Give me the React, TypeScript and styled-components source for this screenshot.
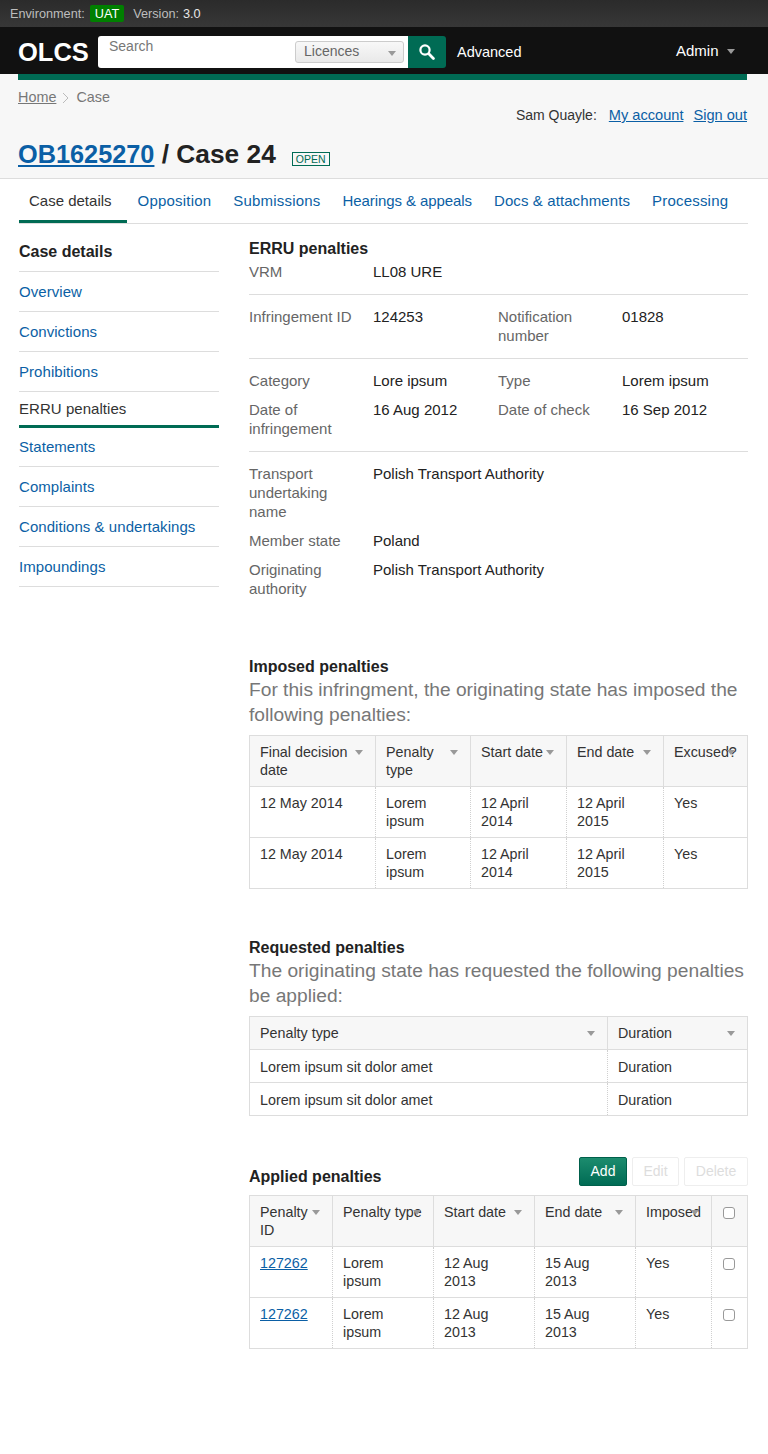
import React from "react";
import styled, { createGlobalStyle } from "styled-components";

const Global = createGlobalStyle`
  html, body { margin: 0; padding: 0; background: #fff; }
  body { font-family: "Liberation Sans", Arial, sans-serif; font-size: 15px; line-height: 19px; color: #222; }
  * { box-sizing: border-box; }
`;

const Page = styled.div`width: 768px; min-height: 1454px; background: #fff;`;

const EnvBar = styled.div`
  height: 27px; padding: 5px 10px 0; display: flex; align-items: flex-start;
  background: linear-gradient(#2b2b2b, #373737); color: #bdbdbd; font-size: 12.7px; line-height: 18px;
`;
const EnvBadge = styled.span`
  height: 17px; margin: 0 9px 0 5px; padding: 0 5px; background: #007f00; color: #fff; border-radius: 2px;
`;
const EnvValue = styled.span`color: #e8e8e8; margin-left: 4px;`;

const Header = styled.header`
  height: 47px; background: #111; display: flex; align-items: flex-start; padding: 9px 33px 0 18px; color: #fff;
`;
const Logo = styled.div`font-size: 25.5px; font-weight: 700; line-height: 32px; width: 80px;`;
const SearchBox = styled.div`
  width: 310px; height: 32px; background: #fff; border-radius: 3px 0 0 3px; padding: 0 4px 0 11px;
  display: flex; justify-content: space-between; align-items: flex-start;
`;
const Placeholder = styled.span`color: #777; font-size: 14px; line-height: 20px;`;
const FakeSelect = styled.div`
  width: 109px; height: 22px; margin-top: 5px; padding-left: 8px; border: 1px solid #ccc; border-radius: 3px;
  background: linear-gradient(#f8f8f8, #e9e9e9); color: #666; font-size: 14px; line-height: 18px; position: relative;
`;
const Caret = styled.span`
  position: absolute; width: 0; height: 0; border-left: 4px solid transparent; border-right: 4px solid transparent;
  border-top: 5px solid #999;
`;
const SelectCaret = styled(Caret)`right: 7px; top: 9px;`;
const SearchButton = styled.div`
  width: 38px; height: 32px; background: #006b54; border-radius: 0 3px 3px 0;
  display: flex; align-items: center; justify-content: center;
`;
const Advanced = styled.span`margin-left: 11px; font-size: 14.5px; line-height: 32px;`;
const Admin = styled.div`
  margin-left: auto; font-size: 15px; line-height: 30px; position: relative; padding-right: 16px; width: 59px; white-space: nowrap;
`;
const AdminCaret = styled(Caret)`right: 0; top: 13px;`;
const GreenRule = styled.div`height: 6px; background: #006b54; margin: 0 21px 0 18px;`;
const GreenWrap = styled.div`background-color: #f7f7f7;`;

const PageHead = styled.div`
  background: #f7f7f7; height: 99px; padding: 8px 21px 0 18px; border-bottom: 1px solid #ddd;
`;
const Breadcrumb = styled.div`display: flex; align-items: center; color: #777; font-size: 14.4px; line-height: 19px;`;
const CrumbLink = styled.a`color: #777; text-decoration: underline;`;
const CrumbSep = styled.svg`width: 8px; height: 12px; margin: 1px 6px 0 6px;`;
const UserRow = styled.div`display: flex; justify-content: flex-end; font-size: 14.6px; line-height: 18px; margin-top: -1px;`;
const UserName = styled.span`margin-right: 12px; color: #333; font-size: 14px;`;
const UserLink = styled.a`color: #0b5fa5; text-decoration: underline; margin-left: ${p => p.$gap || 0}px;`;
const TitleRow = styled.div`display: flex; align-items: center; margin-top: 14px;`;
const Title = styled.h1`margin: 0; font-size: 26.3px; line-height: 32px; font-weight: 700; color: #222;`;
const TitleLink = styled.a`color: #0b5fa5; text-decoration: underline; font-size: 25.3px;`;
const Status = styled.span`
  margin: 9px 0 0 16px; padding: 0 3px; height: 14px; border: 1px solid #006b54; color: #006b54; font-size: 10.5px; line-height: 13px;
`;

const Tabs = styled.nav`
  margin: 0 20px 0 19px; height: 45px; display: flex; border-bottom: 1px solid #ddd; padding-top: 13px;
`;
const Tab = styled.a`
  height: 31px; padding: ${p => p.$active ? "0 15px 0 10px" : "0 11px"}; font-size: 15px; line-height: 18px; white-space: nowrap;
  letter-spacing: ${p => p.$track ?? .25}px;
  color: ${p => p.$active ? "#333" : "#0b5fa5"};
  border-bottom: ${p => p.$active ? "3px solid #006b54" : "0"};
`;

const Body = styled.div`display: flex; padding: 0 20px 0 19px;`;
const Side = styled.aside`width: 200px; margin-right: 30px; flex: none; padding-top: 18px;`;
const SideTitle = styled.div`
  font-size: 16px; font-weight: 700; line-height: 20px; height: 30px; border-bottom: 1px solid #ddd; color: #222;
`;
const SideItem = styled.a`
  display: block; height: ${p => p.$active ? 36 : 40}px; padding-top: ${p => p.$active ? 7 : 10}px; font-size: 15px; line-height: 19px;
  letter-spacing: .05px;
  margin-bottom: ${p => p.$active ? -1 : 0}px;
  color: ${p => p.$active ? "#333" : "#0b5fa5"};
  border-bottom: ${p => p.$active ? "3px solid #006b54" : "1px solid #ddd"};
`;
const Main = styled.main`flex: 1; width: 499px; padding-top: 15px;`;
const Heading = styled.h2`margin: 0; font-size: 16px; line-height: 20px; font-weight: 700; color: #222;`;
const Sub = styled.p`margin: 0 0 8px; font-size: 19.2px; line-height: 25px; color: #777;`;

const Fields = styled.dl`
  margin: 0; display: grid; grid-template-columns: 124px 125px 124px 1fr; row-gap: 10px; padding: ${p => p.$top ?? 12}px 0 ${p => p.$bottom ?? 12}px;
  border-bottom: ${p => p.$last ? "0" : "1px solid #ddd"}; font-size: 15px; line-height: 19px;
`;
const Label = styled.dt`color: #666; padding-right: 8px;`;
const Value = styled.dd`margin: 0; color: #222; grid-column: ${p => p.$wide ? "span 3" : "auto"};`;

const Section = styled.section`margin-top: ${p => p.$top}px;`;
const Table = styled.table`
  width: 498px; table-layout: fixed; border-collapse: collapse; font-size: 14.3px; line-height: 18px;
`;
const Th = styled.th`
  position: relative; text-align: left; font-weight: 400; vertical-align: top; padding: 7px 8px 5px 10px; background: #f7f7f7;
  border: 1px solid #ddd; color: #333; height: ${p => p.$h || 51}px;
`;
const SortCaret = styled(Caret)`right: 12px; top: 14px;`;
const Td = styled.td`
  vertical-align: top; padding: ${p => p.$h ? 8 : 7}px 12px ${p => p.$h ? 5 : 6}px 10px; color: #333; height: ${p => p.$h || 51}px;
  border-top: 1px solid #ddd; border-bottom: 1px solid #ddd; border-left: 1px dotted #d0d0d0; border-right: 1px dotted #d0d0d0;
  &:first-child { border-left: 1px solid #ddd; }
  &:last-child { border-right: 1px solid #ddd; }
`;
const CellLink = styled.a`color: #0b5fa5; text-decoration: underline;`;
const Check = styled.input.attrs({ type: "checkbox" })`
  appearance: none; display: block; width: 12px; height: 12px; margin: 4px 0 0 1px; background: #fff;
  border: 1px solid #999; border-radius: 3px;
`;
const ActionRow = styled.div`display: flex; justify-content: space-between; align-items: flex-start; height: 38px;`;
const AppliedHeading = styled(Heading)`margin-top: 10px;`;
const Actions = styled.div`display: flex; gap: 5px;`;
const Button = styled.button`
  height: 29px; padding: 0 0 2px; width: ${p => p.$w}px; font: 14px "Liberation Sans", Arial, sans-serif; border-radius: 2px;
  border: 1px solid ${p => p.$primary ? "#00604b" : "#eee"};
  background: ${p => p.$primary ? "linear-gradient(#1c8c6e, #006b54)" : "#fff"};
  color: ${p => p.$primary ? "#fff" : "#ddd"};
`;

const Cols = ({ w }: { w: number[] }) => <colgroup>{w.map((x, i) => <col key={i} width={x} />)}</colgroup>;
const H = ({ children, h }: { children?: React.ReactNode; h?: number }) => <Th $h={h}>{children}<SortCaret /></Th>;

export default function App() {
  return (
    <Page>
      <Global />
      <EnvBar>Environment:<EnvBadge>UAT</EnvBadge>Version:<EnvValue>3.0</EnvValue></EnvBar>
      <Header>
        <Logo>OLCS</Logo>
        <SearchBox>
          <Placeholder>Search</Placeholder>
          <FakeSelect>Licences<SelectCaret /></FakeSelect>
        </SearchBox>
        <SearchButton>
          <svg width="16" height="16" viewBox="0 0 16 16" fill="none" stroke="#fff">
            <circle cx="6" cy="6" r="4.6" strokeWidth="2.2" />
            <path d="M9.8 9.8l4.6 4.6" strokeWidth="2.8" strokeLinecap="round" />
          </svg>
        </SearchButton>
        <Advanced>Advanced</Advanced>
        <Admin>Admin<AdminCaret /></Admin>
      </Header>
      <GreenWrap><GreenRule /></GreenWrap>
      <PageHead>
        <Breadcrumb>
          <CrumbLink>Home</CrumbLink>
          <CrumbSep viewBox="0 0 8 12" fill="none" stroke="#bbb"><path d="M1 1l5 5-5 5" /></CrumbSep>
          Case
        </Breadcrumb>
        <UserRow>
          <UserName>Sam Quayle:</UserName>
          <UserLink>My account</UserLink>
          <UserLink $gap={10}>Sign out</UserLink>
        </UserRow>
        <TitleRow>
          <Title><TitleLink>OB1625270</TitleLink> / Case 24</Title>
          <Status>OPEN</Status>
        </TitleRow>
      </PageHead>
      <Tabs>
        <Tab $active $track={0}>Case details</Tab>
        <Tab $track={.2}>Opposition</Tab>
        <Tab $track={.2}>Submissions</Tab>
        <Tab $track={-.08}>Hearings &amp; appeals</Tab>
        <Tab $track={.1}>Docs &amp; attachments</Tab>
        <Tab $track={.2}>Processing</Tab>
      </Tabs>
      <Body>
        <Side>
          <SideTitle>Case details</SideTitle>
          <SideItem>Overview</SideItem>
          <SideItem>Convictions</SideItem>
          <SideItem>Prohibitions</SideItem>
          <SideItem $active>ERRU penalties</SideItem>
          <SideItem>Statements</SideItem>
          <SideItem>Complaints</SideItem>
          <SideItem>Conditions &amp; undertakings</SideItem>
          <SideItem>Impoundings</SideItem>
        </Side>
        <Main>
          <Heading>ERRU penalties</Heading>
          <Fields $top={3} $bottom={13}>
            <Label>VRM</Label><Value $wide>LL08 URE</Value>
          </Fields>
          <Fields $bottom={13}>
            <Label>Infringement ID</Label><Value>124253</Value>
            <Label>Notification number</Label><Value>01828</Value>
          </Fields>
          <Fields $bottom={13}>
            <Label>Category</Label><Value>Lore ipsum</Value>
            <Label>Type</Label><Value>Lorem ipsum</Value>
            <Label>Date of infringement</Label><Value>16 Aug 2012</Value>
            <Label>Date of check</Label><Value>16 Sep 2012</Value>
          </Fields>
          <Fields $last>
            <Label>Transport undertaking name</Label><Value $wide>Polish Transport Authority</Value>
            <Label>Member state</Label><Value $wide>Poland</Value>
            <Label>Originating authority</Label><Value $wide>Polish Transport Authority</Value>
          </Fields>

          <Section $top={47}>
            <Heading>Imposed penalties</Heading>
            <Sub>For this infringment, the originating state has imposed the following penalties:</Sub>
            <Table>
              <Cols w={[126, 95, 96, 97, 84]} />
              <thead><tr>
                <H>Final decision date</H><H>Penalty type</H><H>Start date</H><H>End date</H><H>Excused?</H>
              </tr></thead>
              <tbody>
                {[0, 1].map(i => (
                  <tr key={i}>
                    <Td>12 May 2014</Td><Td>Lorem ipsum</Td><Td>12 April 2014</Td><Td>12 April 2015</Td><Td>Yes</Td>
                  </tr>
                ))}
              </tbody>
            </Table>
          </Section>

          <Section $top={49}>
            <Heading>Requested penalties</Heading>
            <Sub>The originating state has requested the following penalties be applied:</Sub>
            <Table>
              <Cols w={[358, 140]} />
              <thead><tr><H h={33}>Penalty type</H><H h={33}>Duration</H></tr></thead>
              <tbody>
                {[0, 1].map(i => (
                  <tr key={i}><Td $h={33}>Lorem ipsum sit dolor amet</Td><Td $h={33}>Duration</Td></tr>
                ))}
              </tbody>
            </Table>
          </Section>

          <Section $top={41}>
            <ActionRow>
              <AppliedHeading>Applied penalties</AppliedHeading>
              <Actions>
                <Button $primary $w={48}>Add</Button>
                <Button $w={47}>Edit</Button>
                <Button $w={64}>Delete</Button>
              </Actions>
            </ActionRow>
            <Table>
              <Cols w={[83, 101, 101, 101, 76, 36]} />
              <thead><tr>
                <H>Penalty ID</H><H>Penalty type</H><H>Start date</H><H>End date</H><H>Imposed</H>
                <Th><Check /></Th>
              </tr></thead>
              <tbody>
                {[0, 1].map(i => (
                  <tr key={i}>
                    <Td><CellLink>127262</CellLink></Td><Td>Lorem ipsum</Td><Td>12 Aug 2013</Td><Td>15 Aug 2013</Td><Td>Yes</Td>
                    <Td><Check /></Td>
                  </tr>
                ))}
              </tbody>
            </Table>
          </Section>
        </Main>
      </Body>
    </Page>
  );
}
